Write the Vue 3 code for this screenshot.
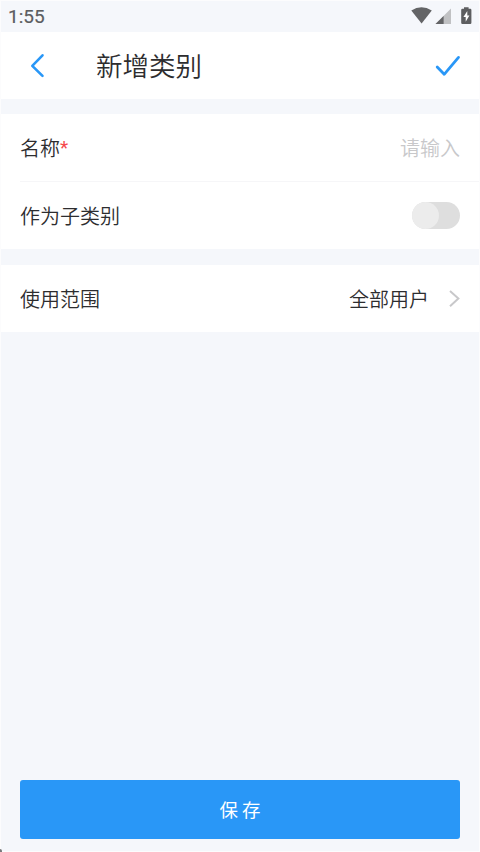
<script setup>
import { ref } from 'vue'

const name = ref('')
const isChild = ref(false)
</script>

<template>
  <div class="screen">
    <div class="status">
      <span class="time">1:55</span>
      <svg class="status-icons" width="64" height="20" viewBox="0 0 64 20">
        <path d="M1.3 4.4Q11.5-1.8 21.8 4.4L11.6 17.4Z" fill="#636466" />
        <path d="M41 2.5V18H25.5Z" fill="#c0c1c3" />
        <path d="M33.6 9.9V18H25.5Z" fill="#636466" />
        <path d="M54 1.2h4.6v1.6h1.6q1.2 0 1.2 1.2v12.8q0 1.2-1.2 1.2h-7.8q-1.2 0-1.2-1.2V4q0-1.2 1.2-1.2H54Z" fill="#5d5e60" />
        <path d="M57.3 5.1 53.4 11h2.3v4.7L59.4 9.5h-2.1Z" fill="#fff" />
      </svg>
    </div>

    <header class="header">
      <svg class="back" width="16" height="26" viewBox="0 0 16 26">
        <path d="M12.5 2.3 2.3 12.8 12.5 22.9" fill="none" stroke="#2997f7" stroke-width="2.6" stroke-linecap="round" stroke-linejoin="round" />
      </svg>
      <h1 class="title">新增类别</h1>
      <svg class="confirm" width="26" height="22" viewBox="0 0 26 22">
        <path d="M2.2 12 9.2 19.3 23.5 2.4" fill="none" stroke="#2997f7" stroke-width="2.8" stroke-linecap="round" stroke-linejoin="round" />
      </svg>
    </header>

    <section class="group">
      <label class="row">
        <span class="label">名称<span class="required">*</span></span>
        <input v-model="name" class="input" placeholder="请输入">
      </label>
      <div class="divider"></div>
      <div class="row">
        <span class="label">作为子类别</span>
        <button class="switch" :class="{ on: isChild }" @click="isChild = !isChild">
          <span class="knob"></span>
        </button>
      </div>
    </section>

    <section class="group">
      <div class="row">
        <span class="label">使用范围</span>
        <span class="value">全部用户</span>
        <svg class="chevron" width="12" height="20" viewBox="0 0 12 20">
          <path d="M2 1.9 10.4 9.5 2 17.3" fill="none" stroke="#c8c8ca" stroke-width="2" />
        </svg>
      </div>
    </section>

    <footer class="footer">
      <button class="save">保 存</button>
    </footer>
    <span class="corner"></span>
  </div>
</template>

<style>
body {
  margin: 0;
}
</style>

<style scoped>
.screen {
  position: relative;
  box-sizing: border-box;
  width: 100%;
  height: 852px;
  display: flex;
  flex-direction: column;
  background: #f5f7fb;
  border: 1px solid #fcfcfd;
  color: #2d2d2f;
  font-family: "Noto Sans CJK SC", sans-serif;
  font-weight: 350;
}
.status {
  flex: none;
  height: 31px;
  display: flex;
  align-items: center;
  justify-content: space-between;
  padding: 0 7px;
}
.time {
  font: 400 19px/30px Roboto, sans-serif;
  color: #5c5d60;
  -webkit-text-stroke: 0.2px #5c5d60;
}
.status-icons {
  margin: 0 -2px 1px 0;
}
.header {
  flex: none;
  height: 67px;
  display: flex;
  align-items: center;
  padding: 0 18px 0 29px;
  background: #fff;
}
.title {
  flex: 1;
  margin: 0 0 2px 50px;
  font-size: 26.5px;
  line-height: 40px;
  font-weight: 350;
}
.group {
  flex: none;
  margin-top: 15px;
  background: #fff;
}
.group + .group {
  margin-top: 16px;
}
.row {
  height: 67px;
  display: flex;
  align-items: center;
  padding: 0 19px;
}
.label {
  flex: 1;
  font-size: 20px;
  line-height: 30px;
}
.required {
  color: #f5484b;
  font-family: Roboto, sans-serif;
  font-size: 19px;
  line-height: 0;
  font-weight: 400;
  vertical-align: 2px;
}
.input {
  width: 200px;
  padding: 0;
  border: 0;
  outline: 0;
  background: none;
  text-align: right;
  font: inherit;
  font-size: 20px;
  line-height: 30px;
  color: inherit;
}
.input::placeholder {
  color: #c8c8ca;
  opacity: 1;
}
.divider {
  height: 1px;
  margin-left: 19px;
  background: #f6f6f8;
}
.switch {
  width: 48px;
  height: 27px;
  display: flex;
  padding: 0;
  border: 0;
  border-radius: 14px;
  background: #dedede;
}
.switch.on {
  justify-content: flex-end;
  background: #2997f7;
}
.knob {
  width: 27px;
  height: 27px;
  border-radius: 50%;
  background: #ececec;
}
.value {
  font-size: 20px;
  line-height: 30px;
}
.chevron {
  margin-left: 19px;
}
.footer {
  margin-top: auto;
  padding: 0 19px 12px;
}
.save {
  display: block;
  width: 100%;
  height: 59px;
  padding: 0 0 2px;
  border: 0;
  border-radius: 3px;
  background: #2997f7;
  color: #fff;
  font: inherit;
  font-size: 18.5px;
  font-weight: 400;
}
.corner {
  position: absolute;
  left: -1px;
  bottom: -1px;
  width: 2px;
  height: 3px;
  border-top-right-radius: 2px;
  background: #77787a;
}
</style>
